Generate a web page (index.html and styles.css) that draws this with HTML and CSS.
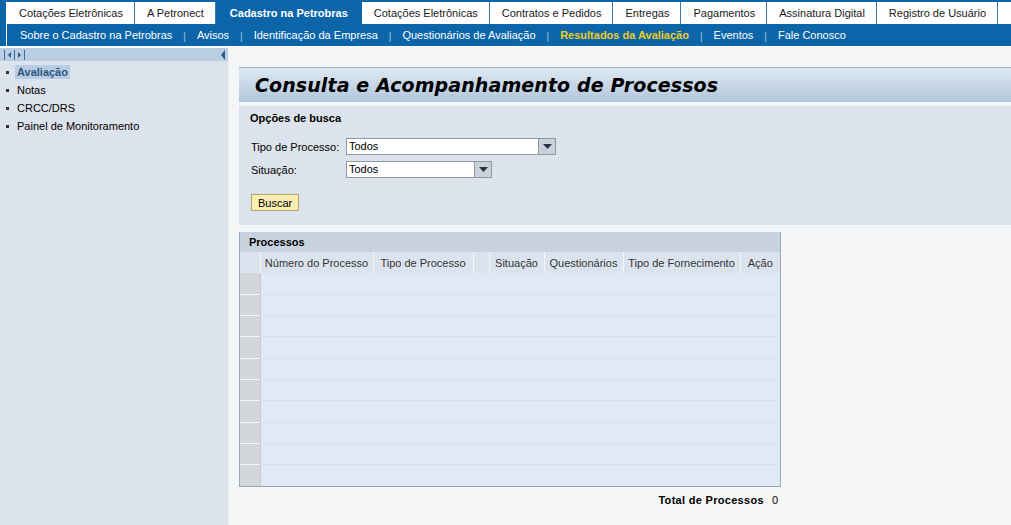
FILE: index.html
```html
<!DOCTYPE html>
<html lang="pt">
<head>
<meta charset="utf-8">
<title>Consulta e Acompanhamento de Processos</title>
<link rel="stylesheet" href="styles.css">
</head>
<body>
<header class="header">
  <nav class="tabs">
    <a class="tab">Cotações Eletrônicas</a>
    <a class="tab">A Petronect</a>
    <a class="tab active">Cadastro na Petrobras</a>
    <a class="tab">Cotações Eletrônicas</a>
    <a class="tab">Contratos e Pedidos</a>
    <a class="tab">Entregas</a>
    <a class="tab">Pagamentos</a>
    <a class="tab">Assinatura Digital</a>
    <a class="tab">Registro de Usuário</a>
  </nav>
  <nav class="subnav">
    <a class="sublink">Sobre o Cadastro na Petrobras</a><span class="sep">|</span>
    <a class="sublink">Avisos</a><span class="sep">|</span>
    <a class="sublink">Identificação da Empresa</a><span class="sep">|</span>
    <a class="sublink">Questionários de Avaliação</a><span class="sep">|</span>
    <a class="sublink current">Resultados da Avaliação</a><span class="sep">|</span>
    <a class="sublink">Eventos</a><span class="sep">|</span>
    <a class="sublink">Fale Conosco</a>
  </nav>
</header>
<div class="layout">
  <aside class="sidebar">
    <div class="side-toolbar">
      <svg class="side-nav" width="30" height="12" viewBox="0 0 30 12">
        <rect x="4" y="1" width="1" height="10" fill="#3d6a98"/>
        <path d="M11 3 L8 6 L11 9 Z" fill="#2e5a88"/>
        <rect x="14" y="1" width="1" height="10" fill="#3d6a98"/>
        <path d="M18 3 L21 6 L18 9 Z" fill="#2e5a88"/>
        <rect x="24" y="1" width="1" height="10" fill="#3d6a98"/>
      </svg>
      <svg class="side-collapse" width="6" height="12" viewBox="0 0 6 12">
        <path d="M5 1 L1 6 L5 11 Z" fill="#2e5a88"/>
      </svg>
    </div>
    <ul class="side-list">
      <li class="side-item"><span class="side-link selected">Avaliação</span></li>
      <li class="side-item"><span class="side-link">Notas</span></li>
      <li class="side-item"><span class="side-link">CRCC/DRS</span></li>
      <li class="side-item"><span class="side-link">Painel de Monitoramento</span></li>
    </ul>
  </aside>
  <main class="main">
    <div class="title-bar"><h1 class="title">Consulta e Acompanhamento de Processos</h1></div>
    <section class="search">
      <h2 class="search-title">Opções de busca</h2>
      <div class="field">
        <label class="field-label">Tipo de Processo:</label>
        <div class="select wide"><span class="select-value">Todos</span><span class="select-btn"><svg width="9" height="5" viewBox="0 0 9 5"><path d="M0 0 H9 L4.5 5 Z" fill="#2b3340"/></svg></span></div>
      </div>
      <div class="field">
        <label class="field-label">Situação:</label>
        <div class="select narrow"><span class="select-value">Todos</span><span class="select-btn"><svg width="9" height="5" viewBox="0 0 9 5"><path d="M0 0 H9 L4.5 5 Z" fill="#2b3340"/></svg></span></div>
      </div>
      <button class="btn">Buscar</button>
    </section>
    <section class="table-box">
      <div class="table-caption">Processos</div>
      <table class="grid">
        <thead>
          <tr>
            <th class="c-sel"></th>
            <th class="c-num">Número do Processo</th>
            <th class="c-tipo">Tipo de Processo</th>
            <th class="c-blank"></th>
            <th class="c-sit">Situação</th>
            <th class="c-quest">Questionários</th>
            <th class="c-forn">Tipo de Fornecimento</th>
            <th class="c-acao">Ação</th>
          </tr>
        </thead>
        <tbody>
          <tr><td class="c-sel"></td><td></td><td></td><td></td><td></td><td></td><td></td><td></td></tr>
          <tr><td class="c-sel"></td><td></td><td></td><td></td><td></td><td></td><td></td><td></td></tr>
          <tr><td class="c-sel"></td><td></td><td></td><td></td><td></td><td></td><td></td><td></td></tr>
          <tr><td class="c-sel"></td><td></td><td></td><td></td><td></td><td></td><td></td><td></td></tr>
          <tr><td class="c-sel"></td><td></td><td></td><td></td><td></td><td></td><td></td><td></td></tr>
          <tr><td class="c-sel"></td><td></td><td></td><td></td><td></td><td></td><td></td><td></td></tr>
          <tr><td class="c-sel"></td><td></td><td></td><td></td><td></td><td></td><td></td><td></td></tr>
          <tr><td class="c-sel"></td><td></td><td></td><td></td><td></td><td></td><td></td><td></td></tr>
          <tr><td class="c-sel"></td><td></td><td></td><td></td><td></td><td></td><td></td><td></td></tr>
          <tr><td class="c-sel"></td><td></td><td></td><td></td><td></td><td></td><td></td><td></td></tr>
        </tbody>
      </table>
    </section>
    <div class="total"><b class="total-label">Total de Processos</b><span class="total-num">0</span></div>
  </main>
</div>
</body>
</html>
```
FILE: styles.css
```css
* { box-sizing: border-box; }
html, body { margin: 0; padding: 0; }
body {
  font-family: "Liberation Sans", Arial, sans-serif;
  font-size: 11px;
  color: #000;
  background: #f4f6f8;
  width: 1011px;
  height: 525px;
  overflow: hidden;
}
.header {
  border-left: 6px solid #0d65a9;
  border-top: 2px solid #0d65a9;
}
.tabs {
  display: flex;
  height: 22px;
  background: #fff;
  padding-left: 1px;
}
.tab {
  display: flex;
  align-items: center;
  padding: 0 11px 0 12px;
  border-right: 1px solid #3b79b0;
  color: #1a1a1a;
  white-space: nowrap;
}
.tab.active {
  background: #0d65a9;
  color: #fff;
  font-weight: bold;
  border-right: none;
  padding: 0 14px 0 14px;
}
.subnav {
  display: flex;
  align-items: center;
  height: 22px;
  background: #0d65a9;
  border-left: 1px solid #fff;
  padding-left: 13px;
  color: #fff;
}
.sublink { color: #fff; white-space: nowrap; }
.sublink.current { color: #f0cd1c; font-weight: bold; }
.sep { color: #aac6e0; margin: 0 11px 0 11px; font-size: 10px; position: relative; top: 1px; }
.layout {
  display: flex;
  height: 479px;
  padding-top: 1px;
  background: #fff;
}
.sidebar {
  width: 229px;
  background: #dde3ec;
  border-top: 1px solid #fff;
  border-right: 1px solid #eef1f5;
}
.side-toolbar {
  display: flex;
  justify-content: space-between;
  align-items: center;
  height: 13px;
  background: #b9cee3;
  padding: 0 2px 0 0;
}
.side-nav { display: block; }
.side-collapse { display: block; }
.side-list {
  list-style: none;
  margin: 0;
  padding: 2px 0 0 0;
}
.side-item {
  display: flex;
  align-items: center;
  height: 18px;
  padding-left: 6px;
}
.side-item::before {
  content: "";
  width: 3px;
  height: 3px;
  background: #333;
  margin-right: 8px;
}
.side-link { padding: 1px 2px; margin-left: -2px; color: #000; }
.side-link.selected {
  background: #b8cde3;
  color: #2f5582;
  font-weight: bold;
}
.main {
  flex: 1;
  background: #f4f6f8;
  padding: 20px 0 0 10px;
  display: flex;
  flex-direction: column;
}
.title-bar {
  height: 35px;
  border-top: 1px solid #9eafc0;
  background: linear-gradient(#dfe8f1, #b0c6db);
  padding-left: 16px;
  display: flex;
  align-items: center;
}
.title {
  margin: 0;
  font-family: "DejaVu Sans", Verdana, sans-serif;
  font-weight: bold;
  font-style: italic;
  font-size: 19px;
  color: #000;
  letter-spacing: 0.1px;
}
.search {
  margin-top: 4px;
  background: #dde3ec;
  height: 119px;
  padding: 6px 0 0 11px;
}
.search-title {
  margin: 0 0 14px 0;
  font-size: 11px;
  font-weight: bold;
  line-height: 12px;
}
.field {
  display: flex;
  align-items: center;
  height: 17px;
  margin-bottom: 6px;
}
.field-label { width: 96px; padding-left: 1px; white-space: nowrap; }
.select {
  display: flex;
  height: 17px;
  border: 1px solid #8e98a4;
  background: #fff;
}
.select.wide { width: 210px; }
.select.narrow { width: 146px; }
.select-value { flex: 1; padding-left: 2px; line-height: 15px; }
.select-btn {
  width: 17px;
  background: #c9d1db;
  border-left: 1px solid #8e98a4;
  display: flex;
  align-items: center;
  justify-content: center;
}
.btn {
  margin-top: 16px;
  margin-left: 1px;
  display: block;
  height: 17px;
  padding: 0 6px;
  font: 11px "Liberation Sans", Arial, sans-serif;
  background: #fbeeb3;
  border: 1px solid #b5a66a;
  color: #000;
}
.table-box {
  margin-top: 7px;
  width: 542px;
  border: 1px solid #98a6b5;
  border-top: none;
  background: #dfeaf4;
}
.table-caption {
  height: 20px;
  background: #c9d3df;
  font-weight: bold;
  padding-left: 9px;
  line-height: 20px;
}
.grid {
  width: 540px;
  border-collapse: collapse;
  table-layout: fixed;
}
.grid th {
  height: 21px;
  font-weight: normal;
  color: #333;
  background: #dbe4ee;
  border-left: 1px solid #f3f6f9;
  text-align: center;
  white-space: nowrap;
  padding: 0;
}
.grid th:first-child { border-left: none; }
.grid td {
  height: 21.3px;
  border-top: 1px solid #d5e1ec;
  padding: 0;
}
.grid td.c-sel {
  background: #d3d6db;
  border-top: 1px solid #f5f6f7;
  border-right: 1px solid #c4c9d0;
}
.grid tbody tr:first-child td { border-top: none; }
.c-sel { width: 20px; }
.c-num { width: 113px; }
.c-tipo { width: 100px; }
.c-blank { width: 16px; }
.c-sit { width: 55px; }
.c-quest { width: 79px; }
.c-forn { width: 117px; }
.c-acao { width: 40px; }
.total {
  width: 542px;
  text-align: right;
  margin-top: 7px;
  padding-right: 3px;
}
.total-label { letter-spacing: 0.3px; }
.total-num { margin-left: 8px; }
```
